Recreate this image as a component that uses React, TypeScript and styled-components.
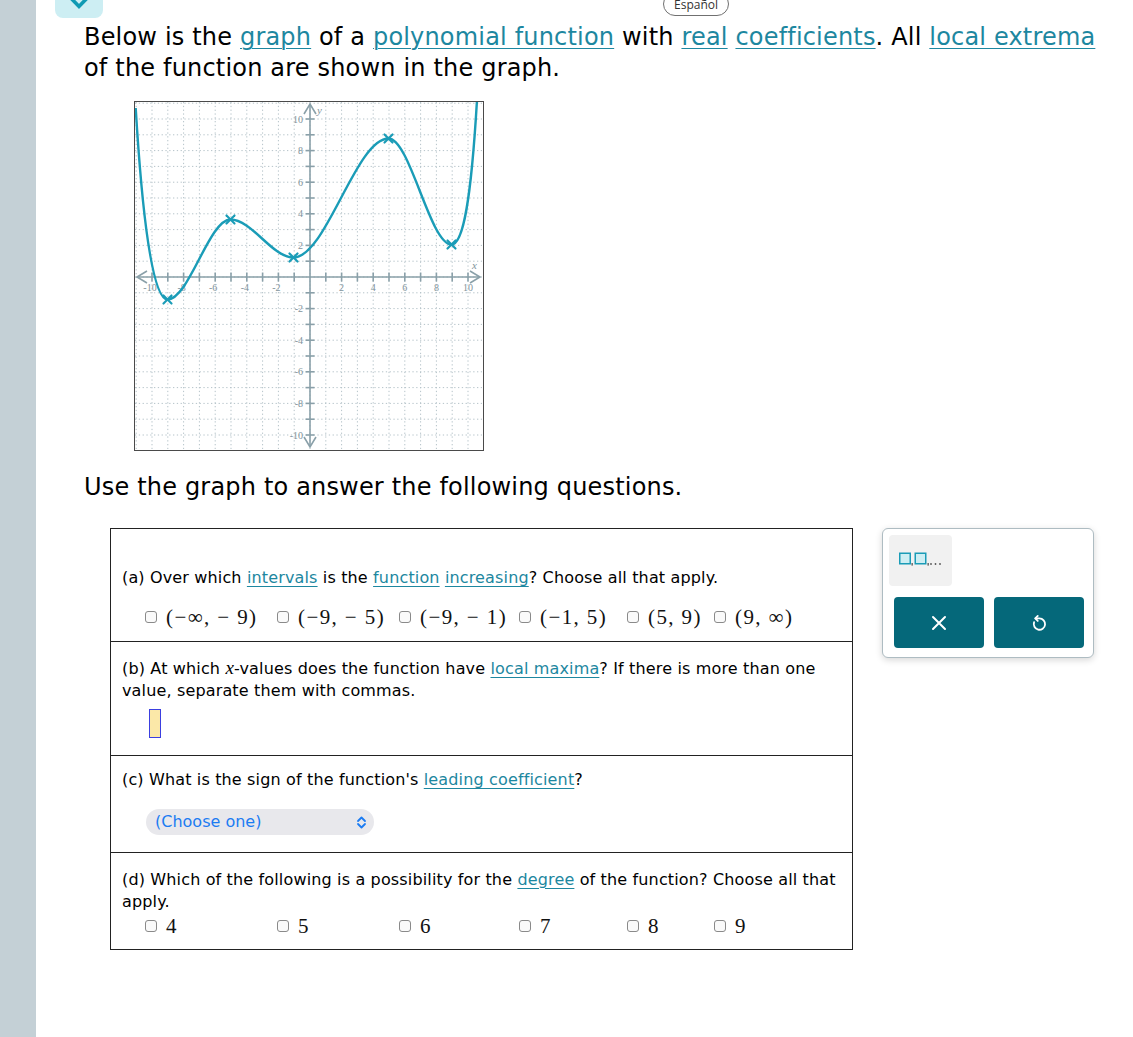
import React from 'react';
import styled, { createGlobalStyle } from 'styled-components';

const GlobalStyle = createGlobalStyle`
  html, body { margin: 0; padding: 0; background: #fff; }
  body {
    font-family: "DejaVu Sans", Verdana, sans-serif;
    color: #000;
  }
`;

const TEAL = '#1a9cb7';
const LINK = '#1d87a0';

// ---------- page frame ----------

const Page = styled.div`
  display: flex;
  min-height: 1037px;
`;

const Rail = styled.div`
  width: 36px;
  flex: none;
  background: #c4d0d6;
`;

const Main = styled.main`
  flex: 1;
  padding-left: 48px;
  overflow: hidden;
`;

const TopBar = styled.div`
  display: flex;
  align-items: flex-start;
  height: 18px;
  margin-left: -29px;
`;

const CollapseTab = styled.div`
  width: 48px;
  height: 28px;
  margin-top: -10px;
  background: #cdeef3;
  border-radius: 0 0 8px 8px;
  display: flex;
  justify-content: center;
  align-items: flex-start;
  overflow: hidden;
  svg { display: block; }
`;

const LangPill = styled.div`
  margin-left: 560px;
  margin-top: -8px;
  height: 22px;
  padding: 0 10px;
  border: 1px solid #707070;
  border-radius: 12px;
  display: flex;
  align-items: center;
  font-family: "Open Sans", sans-serif;
  font-size: 12px;
  color: #333;
`;

const Intro = styled.p`
  margin: 4px 0 0;
  max-width: 1030px;
  font-size: 24px;
  letter-spacing: 0.18px;
  line-height: 31px;
`;

const Lead = styled.p`
  margin: 21px 0 0;
  font-size: 24px;
  letter-spacing: 0.18px;
  line-height: 31px;
`;

const Term = styled.span`
  color: ${LINK};
  text-decoration: underline;
  text-underline-offset: 3px;
  text-decoration-thickness: 1px;
`;

const GraphFrame = styled.div`
  margin: 17px 0 0 50px;
  width: 350px;
  height: 350px;
  border: 1.5px solid #4a4a4a;
  box-sizing: border-box;
  svg { display: block; }
`;

// ---------- question area ----------

const Work = styled.div`
  display: flex;
  align-items: flex-start;
  gap: 29px;
  margin: 25px 0 0 26px;
`;

const QuestionTable = styled.div`
  width: 743px;
  border: 1px solid #222;
  box-sizing: border-box;
`;

const QuestionRow = styled.section<{ $pad: string }>`
  padding: ${(p) => p.$pad};
  font-size: 16px;
  letter-spacing: 0.15px;
  line-height: 22px;
  & + & { border-top: 1.5px solid #222; }
`;

const Prompt = styled.p`
  margin: 0;
`;

const Var = styled.span`
  font-family: "Liberation Serif", serif;
  font-style: italic;
  font-size: 19px;
`;

const OptionGrid = styled.div<{ $top: number }>`
  display: grid;
  grid-template-columns: 132px 122px 120px 108px 87px auto;
  margin: ${(p) => p.$top}px 0 0 23px;
`;

const Option = styled.label`
  display: flex;
  align-items: center;
  gap: 9px;
  height: 24px;
`;

const Box = styled.span`
  width: 12px;
  height: 12px;
  border: 1.5px solid #8a8a8a;
  border-radius: 3px;
  box-sizing: border-box;
  background: #fafafa;
  flex: none;
`;

const MathText = styled.span`
  font-family: "Liberation Serif", serif;
  font-size: 21px;
  letter-spacing: 1.4px;
  white-space: pre;
  color: #111;
`;

const AnswerSlot = styled.div`
  margin: 7px 0 0 27px;
  width: 12px;
  height: 29px;
  box-sizing: border-box;
  border: 1.5px solid #3b3fe0;
  background: #fbe8a8;
`;

const SelectPill = styled.div`
  margin: 18px 0 0 24px;
  width: 228px;
  height: 26px;
  border-radius: 13px;
  background: #e8e8ec;
  display: flex;
  align-items: center;
  justify-content: space-between;
  padding: 0 7px 0 9px;
  box-sizing: border-box;
  color: #1c7cf2;
  font-size: 16px;
  letter-spacing: 0;
`;

// ---------- side tool panel ----------

const ToolPanel = styled.aside`
  width: 212px;
  height: 130px;
  box-sizing: border-box;
  border: 1px solid #aebcc2;
  border-radius: 6px;
  box-shadow: 0 2px 7px rgba(0, 0, 0, 0.16);
  padding: 6px 0 0 6px;
  background: #fff;
`;

const PaletteTile = styled.div`
  width: 63px;
  height: 51px;
  border-radius: 4px;
  background: #f1f1f1;
  display: flex;
  align-items: center;
  justify-content: center;
  padding-bottom: 3px;
  box-sizing: border-box;
`;

const ActionRow = styled.div`
  display: flex;
  gap: 10px;
  margin: 11px 0 0 5px;
`;

const ActionButton = styled.button`
  width: 90px;
  height: 51px;
  border: none;
  border-radius: 4px;
  background: #05687a;
  color: #fff;
  display: flex;
  align-items: center;
  justify-content: center;
  padding: 0;
`;

// ---------- graph ----------

const S = 15.8;
const O = 175;
const px = (x: number) => O + x * S;
const py = (y: number) => O - y * S;

const extrema: [number, number][] = [
  [32.5, 197.5],
  [95.5, 117.5],
  [158.5, 155.5],
  [253.5, 36.5],
  [316.5, 142.5],
];

const curve =
  'M0.7 6 C7 110 17 197.5 32.5 197.5 ' +
  'C54 197.5 74 117.5 95.5 117.5 ' +
  'C117 117.5 137 155.5 158.5 155.5 ' +
  'C191 155.5 221 36.5 253.5 36.5 ' +
  'C275 36.5 295 142.5 316.5 142.5 ' +
  'C328 142.5 336 100 342 -2';

const Graph = () => {
  const units = Array.from({ length: 23 }, (_, i) => i - 11);
  const labels = [-10, -8, -6, -4, -2, 2, 4, 6, 8, 10];
  const axis = '#8aa0a9';
  const labelColor = '#7f939b';
  return (
    <svg width={347} height={347} viewBox="0 0 347 347">
      <g stroke="#b5c3c9" strokeWidth={1} strokeDasharray="1.3 2.5">
        {units.map((u) => (
          <line key={'v' + u} x1={px(u)} y1={0} x2={px(u)} y2={347} />
        ))}
        {units.map((u) => (
          <line key={'h' + u} x1={0} y1={py(u)} x2={347} y2={py(u)} />
        ))}
      </g>
      <g stroke={axis} strokeWidth={1.6} fill="none">
        <line x1={2} y1={O} x2={345} y2={O} />
        <line x1={O} y1={2} x2={O} y2={345} />
        <polyline points={`12,${O - 6} 2,${O} 12,${O + 6}`} />
        <polyline points={`335,${O - 6} 345,${O} 335,${O + 6}`} />
        <polyline points={`${O - 6},12 ${O},2 ${O + 6},12`} />
        <polyline points={`${O - 6},335 ${O},345 ${O + 6},335`} />
        {units
          .filter((u) => u !== 0 && Math.abs(u) <= 10)
          .map((u) => (
            <g key={'t' + u}>
              <line x1={px(u)} y1={O - 4.5} x2={px(u)} y2={O + 4.5} />
              <line x1={O - 4.5} y1={py(u)} x2={O + 4.5} y2={py(u)} />
            </g>
          ))}
      </g>
      <g fontFamily="Liberation Serif, serif" fontSize={10} fill={labelColor}>
        {labels.map((l) => (
          <text key={'xl' + l} x={px(l) - (l < 0 ? 2 : 0)} y={O + 14} textAnchor="middle">
            {l}
          </text>
        ))}
        {labels.map((l) => (
          <text key={'yl' + l} x={O - 7} y={py(l) + 3.5} textAnchor="end">
            {l}
          </text>
        ))}
        <text x={337} y={O - 8} fontStyle="italic" fontSize={11}>x</text>
        <text x={182} y={12} fontStyle="italic" fontSize={11}>y</text>
      </g>
      <path d={curve} fill="none" stroke={TEAL} strokeWidth={2.4} />
      <g stroke={TEAL} strokeWidth={2.2} strokeLinecap="round">
        {extrema.map(([x, y]) => (
          <g key={x}>
            <line x1={x - 4} y1={y - 4} x2={x + 4} y2={y + 4} />
            <line x1={x - 4} y1={y + 4} x2={x + 4} y2={y - 4} />
          </g>
        ))}
      </g>
    </svg>
  );
};

// ---------- small icons ----------

const ListIcon = () => (
  <svg width={44} height={14} viewBox="0 0 44 14">
    <rect x={0.75} y={1.25} width={10.5} height={10.5} fill="#cdeef3" stroke={TEAL} strokeWidth={1.5} />
    <rect x={16.25} y={1.25} width={10.5} height={10.5} fill="#cdeef3" stroke={TEAL} strokeWidth={1.5} />
    <g fill="#555">
      <rect x={12.5} y={11} width={1.3} height={2.6} />
      <rect x={28.5} y={11} width={1.3} height={2.6} />
      <circle cx={32} cy={12} r={0.9} />
      <circle cx={36.5} cy={12} r={0.9} />
      <circle cx={41} cy={12} r={0.9} />
    </g>
  </svg>
);

const CloseIcon = () => (
  <svg width={16} height={16} viewBox="0 0 16 16">
    <path d="M2 2 L14 14 M14 2 L2 14" stroke="#fff" strokeWidth={2} strokeLinecap="round" />
  </svg>
);

const UndoIcon = () => (
  <svg width={20} height={20} viewBox="0 0 24 24" fill="none" stroke="#fff" strokeWidth={2.2} strokeLinecap="round" strokeLinejoin="round">
    <path d="M10.5 3.5 L7.5 6.5 L10.5 9.5" />
    <path d="M7.8 6.5 H12.5 A6.8 6.8 0 1 1 6.1 11" />
  </svg>
);

const UpDown = () => (
  <svg width={11} height={13} viewBox="0 0 11 13" fill="none" stroke="#1c7cf2" strokeWidth={1.8} strokeLinecap="round" strokeLinejoin="round">
    <path d="M2 5 L5.5 1.5 L9 5" />
    <path d="M2 8 L5.5 11.5 L9 8" />
  </svg>
);

// ---------- page ----------

const intervals = [
  '(−∞, − 9)',
  '(−9, − 5)',
  '(−9, − 1)',
  '(−1, 5)',
  '(5, 9)',
  '(9, ∞)',
];

const degrees = ['4', '5', '6', '7', '8', '9'];

export default function App() {
  return (
    <>
      <GlobalStyle />
      <Page>
        <Rail />
        <Main>
          <TopBar>
            <CollapseTab>
              <svg width={30} height={20} viewBox="0 0 30 20">
                <polyline points="2,3 15,16.5 28,3" fill="none" stroke="#0f9ab3" strokeWidth={3.6} />
              </svg>
            </CollapseTab>
            <LangPill>Español</LangPill>
          </TopBar>

          <Intro>
            Below is the <Term>graph</Term> of a <Term>polynomial function</Term> with{' '}
            <Term>real</Term> <Term>coefficients</Term>. All <Term>local extrema</Term> of the
            function are shown in the graph.
          </Intro>

          <GraphFrame>
            <Graph />
          </GraphFrame>

          <Lead>Use the graph to answer the following questions.</Lead>

          <Work>
            <QuestionTable>
              <QuestionRow $pad="38px 4px 12px 11px">
                <Prompt>
                  (a) Over which <Term>intervals</Term> is the <Term>function</Term>{' '}
                  <Term>increasing</Term>? Choose all that apply.
                </Prompt>
                <OptionGrid $top={16}>
                  {intervals.map((t) => (
                    <Option key={t}>
                      <Box />
                      <MathText>{t}</MathText>
                    </Option>
                  ))}
                </OptionGrid>
              </QuestionRow>

              <QuestionRow $pad="14.5px 4px 17px 11px">
                <Prompt>
                  (b) At which <Var>x</Var>-values does the function have{' '}
                  <Term>local maxima</Term>? If there is more than one value, separate them with
                  commas.
                </Prompt>
                <AnswerSlot />
              </QuestionRow>

              <QuestionRow $pad="13.5px 4px 17px 11px">
                <Prompt>
                  (c) What is the sign of the function's <Term>leading coefficient</Term>?
                </Prompt>
                <SelectPill>
                  <span>(Choose one)</span>
                  <UpDown />
                </SelectPill>
              </QuestionRow>

              <QuestionRow $pad="15.5px 4px 11px 11px">
                <Prompt>
                  (d) Which of the following is a possibility for the <Term>degree</Term> of the
                  function? Choose all that apply.
                </Prompt>
                <OptionGrid $top={1}>
                  {degrees.map((d) => (
                    <Option key={d}>
                      <Box />
                      <MathText>{d}</MathText>
                    </Option>
                  ))}
                </OptionGrid>
              </QuestionRow>
            </QuestionTable>

            <ToolPanel>
              <PaletteTile>
                <ListIcon />
              </PaletteTile>
              <ActionRow>
                <ActionButton aria-label="Clear">
                  <CloseIcon />
                </ActionButton>
                <ActionButton aria-label="Undo">
                  <UndoIcon />
                </ActionButton>
              </ActionRow>
            </ToolPanel>
          </Work>
        </Main>
      </Page>
    </>
  );
}
